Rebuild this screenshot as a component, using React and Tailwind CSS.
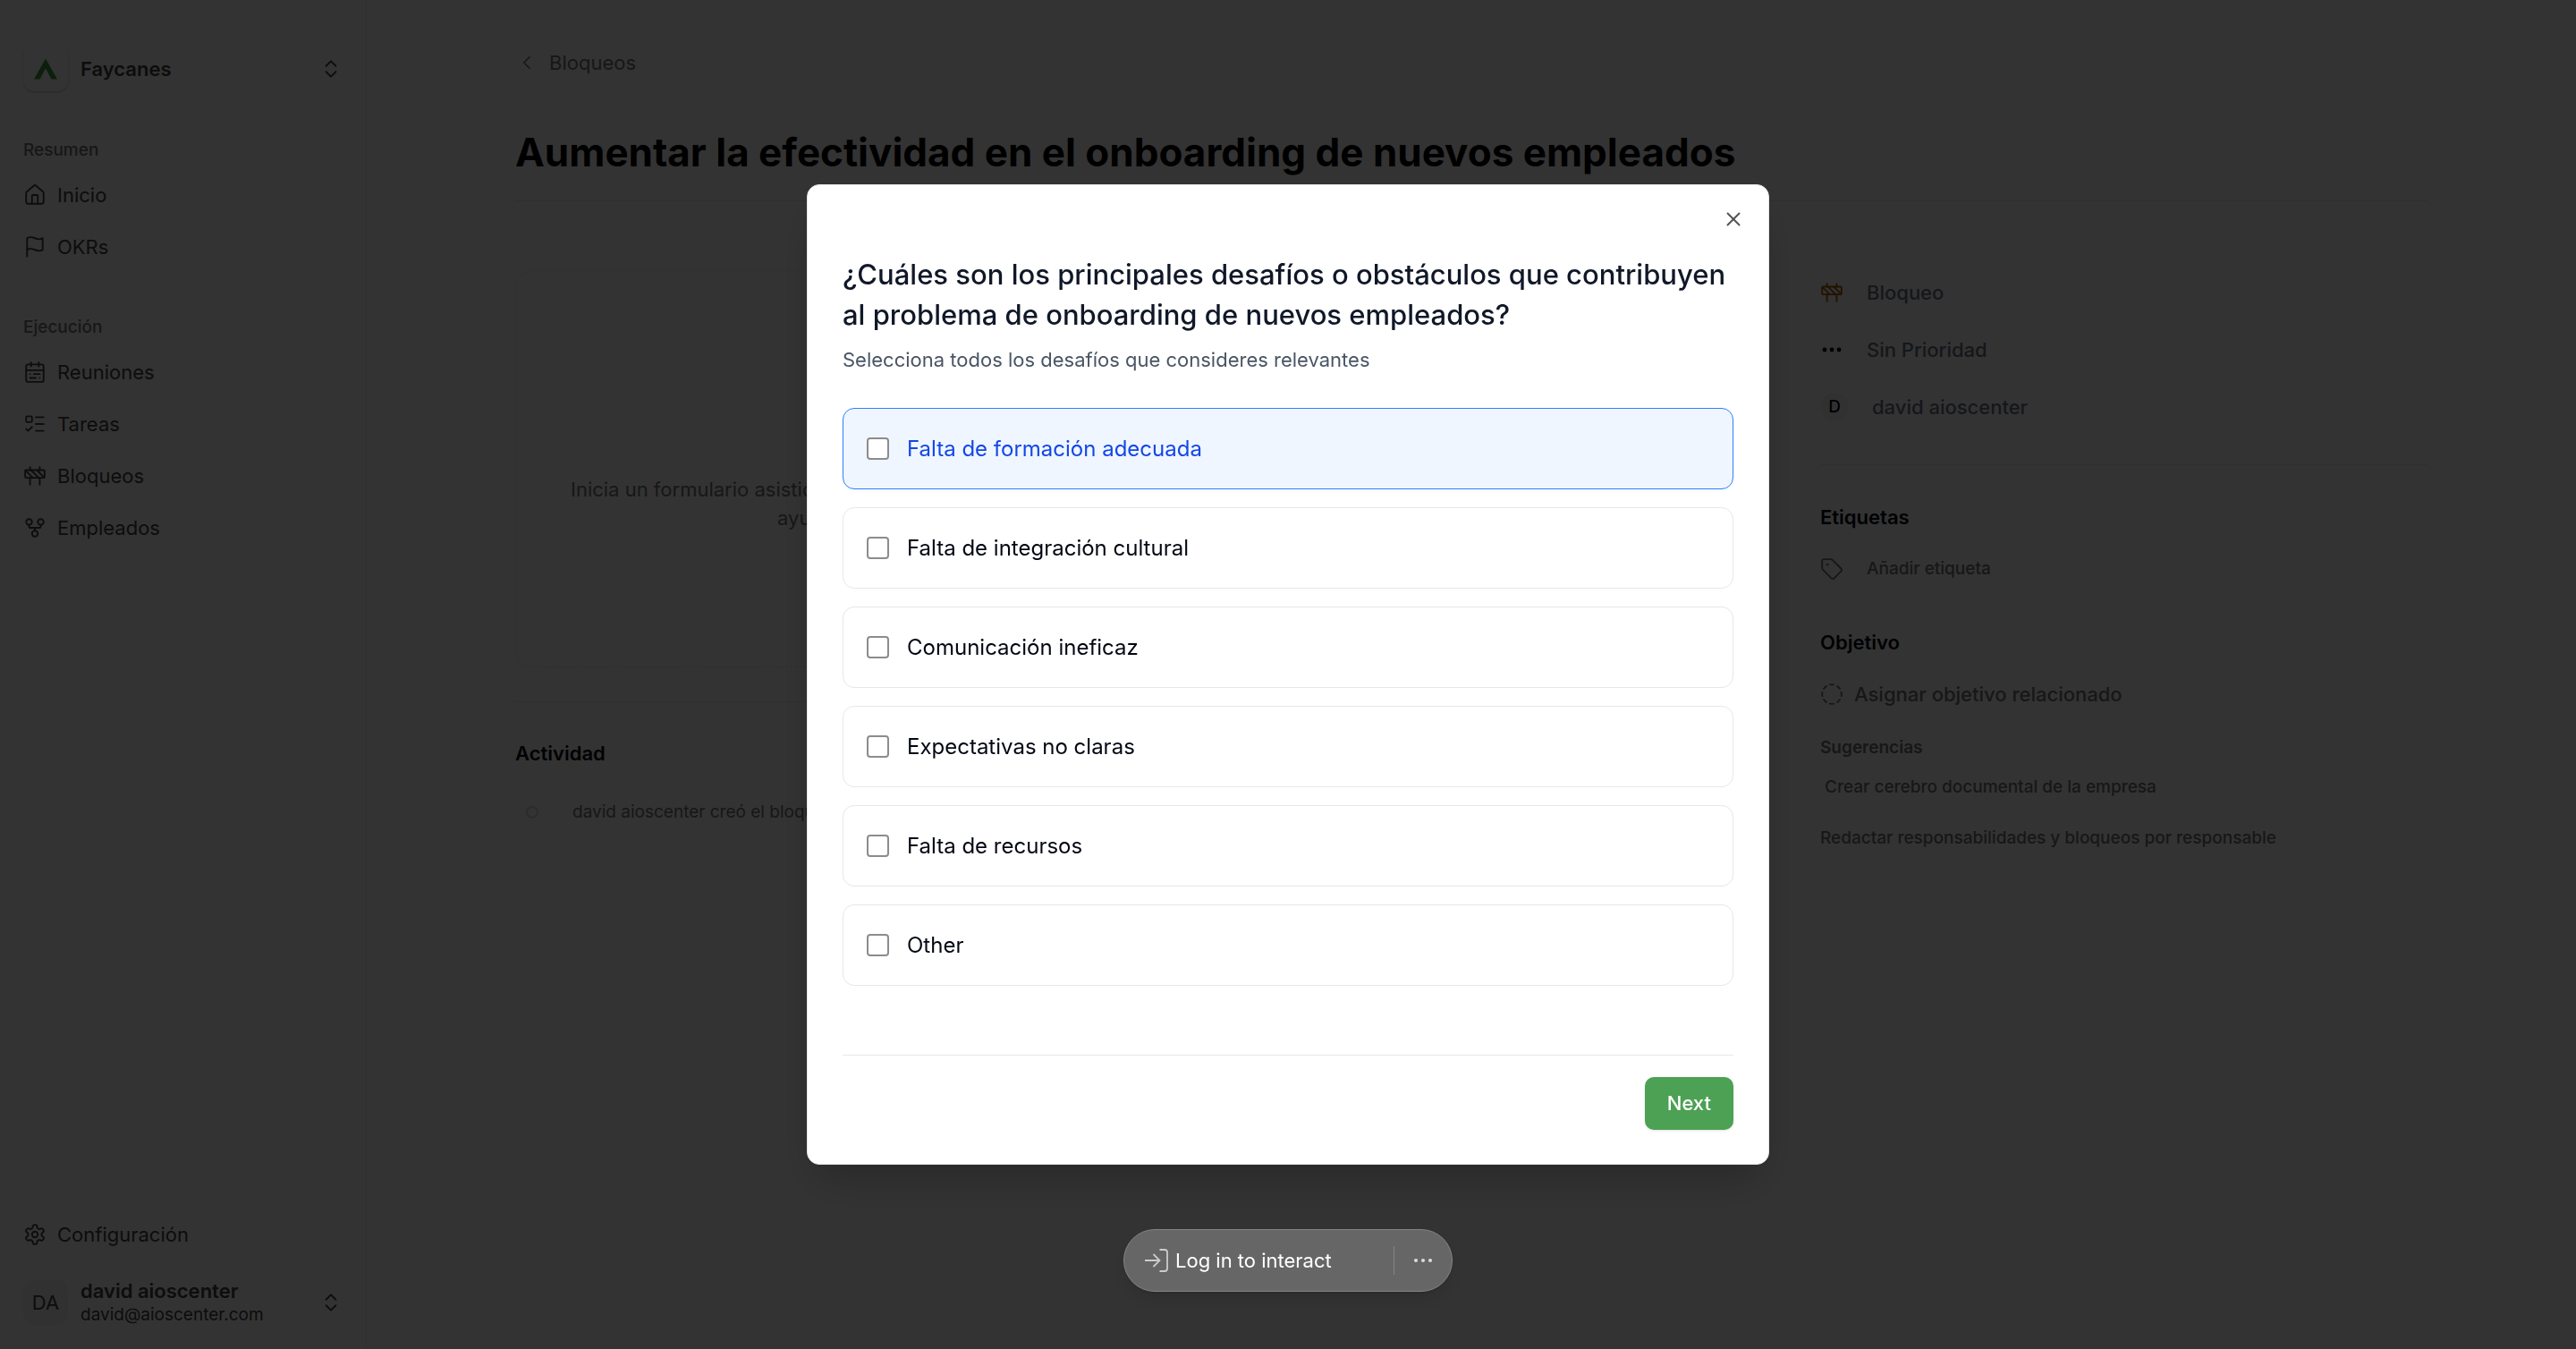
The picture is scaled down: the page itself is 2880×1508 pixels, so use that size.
import React, { useState } from 'react';
import {
  CalendarRange,
  ChevronLeft,
  ChevronsUpDown,
  CircleDashed,
  Construction,
  GitFork,
  House,
  ListTodo,
  Tag,
  X,
} from 'lucide-react';

const FlagIcon = ({ className }) => (
  <svg className={className} viewBox="0 0 24 24" fill="none" stroke="currentColor" strokeWidth="1.75" strokeLinecap="round" strokeLinejoin="round">
    <path d="M4 15s1-1 4-1 5 2 8 2 4-1 4-1V3s-1 1-4 1-5-2-8-2-4 1-4 1z" />
    <path d="M4 22v-7" />
  </svg>
);

const SettingsIcon = ({ className }) => (
  <svg className={className} viewBox="0 0 24 24" fill="none" stroke="currentColor" strokeWidth="1.75" strokeLinecap="round" strokeLinejoin="round">
    <path d="M12.22 2h-.44a2 2 0 0 0-2 2v.18a2 2 0 0 1-1 1.73l-.43.25a2 2 0 0 1-2 0l-.15-.08a2 2 0 0 0-2.73.73l-.22.38a2 2 0 0 0 .73 2.73l.15.1a2 2 0 0 1 1 1.72v.51a2 2 0 0 1-1 1.74l-.15.09a2 2 0 0 0-.73 2.73l.22.38a2 2 0 0 0 2.73.73l.15-.08a2 2 0 0 1 2 0l.43.25a2 2 0 0 1 1 1.73V20a2 2 0 0 0 2 2h.44a2 2 0 0 0 2-2v-.18a2 2 0 0 1 1-1.73l.43-.25a2 2 0 0 1 2 0l.15.08a2 2 0 0 0 2.73-.73l.22-.39a2 2 0 0 0-.73-2.73l-.15-.08a2 2 0 0 1-1-1.74v-.5a2 2 0 0 1 1-1.74l.15-.09a2 2 0 0 0 .73-2.73l-.22-.38a2 2 0 0 0-2.73-.73l-.15.08a2 2 0 0 1-2 0l-.43-.25a2 2 0 0 1-1-1.73V4a2 2 0 0 0-2-2z" />
    <circle cx="12" cy="12" r="3" />
  </svg>
);

const DotsIcon = ({ className }) => (
  <svg className={className} viewBox="0 0 26 26" fill="currentColor">
    <circle cx="5" cy="13" r="2.4" />
    <circle cx="13" cy="13" r="2.4" />
    <circle cx="21" cy="13" r="2.4" />
  </svg>
);

const sections = [
  {
    title: 'Resumen',
    items: [
      { label: 'Inicio', icon: House },
      { label: 'OKRs', icon: FlagIcon },
    ],
  },
  {
    title: 'Ejecución',
    items: [
      { label: 'Reuniones', icon: CalendarRange },
      { label: 'Tareas', icon: ListTodo },
      { label: 'Bloqueos', icon: Construction },
      { label: 'Empleados', icon: GitFork },
    ],
  },
];

const options = [
  'Falta de formación adecuada',
  'Falta de integración cultural',
  'Comunicación ineficaz',
  'Expectativas no claras',
  'Falta de recursos',
  'Other',
];

const NavItem = ({ icon: Icon, label }) => (
  <a href="#" className="flex h-[52px] items-center gap-3 text-[22px] text-neutral-700">
    <Icon className="size-[26px]" strokeWidth={1.75} />
    {label}
  </a>
);

const Sidebar = () => (
  <aside className="flex w-[410px] shrink-0 flex-col border-r border-[#ececec] px-[26px] pt-[52px] pb-[27px]">
    <button type="button" className="flex items-center gap-[14px] text-left">
      <span className="flex size-[50px] items-center justify-center rounded-xl shadow-sm shadow-black/20">
        <svg className="size-[26px]" viewBox="0 0 26 26">
          <path d="M13 1.5 26 24.5H19.5L13 12.5 6.5 24.5H0Z" fill="#3f9d43" />
        </svg>
      </span>
      <span className="flex-1 text-[22px] font-semibold text-neutral-700">Faycanes</span>
      <ChevronsUpDown className="size-[26px] text-neutral-700" strokeWidth={1.75} />
    </button>

    <nav className="mt-[54px] flex flex-col gap-[52px]">
      {sections.map((section) => (
        <div key={section.title}>
          <h2 className="mb-3 text-[19px] leading-6 font-medium text-neutral-500">{section.title}</h2>
          <div className="flex flex-col gap-[6px]">
            {section.items.map((item) => (
              <NavItem key={item.label} {...item} />
            ))}
          </div>
        </div>
      ))}
    </nav>

    <div className="mt-auto">
      <NavItem icon={SettingsIcon} label="Configuración" />
      <button type="button" className="mt-[25px] flex h-[50px] w-full items-center gap-[14px] text-left text-neutral-700">
        <span className="flex size-[50px] items-center justify-center rounded-xl bg-neutral-100 text-[22px]">DA</span>
        <span className="flex-1">
          <span className="block text-[22px] leading-7 font-semibold">david aioscenter</span>
          <span className="block text-[19px] leading-[26px]">david@aioscenter.com</span>
        </span>
        <ChevronsUpDown className="size-[26px]" strokeWidth={1.75} />
      </button>
    </div>
  </aside>
);

const Details = () => (
  <div className="pt-[39px]">
    <div className="flex flex-col text-[22px] font-medium text-gray-500">
      <button type="button" className="flex h-16 items-center gap-[26px]">
        <Construction className="size-[26px] text-yellow-700" strokeWidth={1.75} />
        Bloqueo
      </button>
      <button type="button" className="flex h-16 items-center gap-[26px]">
        <DotsIcon className="size-[26px] text-black" />
        Sin Prioridad
      </button>
      <button type="button" className="flex h-16 items-center gap-[26px]">
        <span className="flex size-8 items-center justify-center rounded-full bg-neutral-100 text-[19px] text-black">D</span>
        david aioscenter
      </button>
    </div>

    <div className="mt-8 border-t border-[#ececec] pt-[42px]">
      <h2 className="text-[22px] leading-8 font-semibold text-gray-950">Etiquetas</h2>
      <button type="button" className="mt-[26px] flex h-8 items-center gap-[26px] text-[19px] font-medium text-neutral-500">
        <Tag className="size-[26px]" strokeWidth={1.75} />
        Añadir etiqueta
      </button>
    </div>

    <div className="mt-[50px]">
      <h2 className="text-[22px] leading-8 font-semibold text-gray-950">Objetivo</h2>
      <button type="button" className="mt-[26px] flex h-8 items-center gap-3 text-[22px] font-medium text-neutral-500">
        <CircleDashed className="size-[26px]" strokeWidth={1.75} />
        Asignar objetivo relacionado
      </button>
      <h3 className="mt-8 text-[19px] leading-6 font-semibold text-neutral-500">Sugerencias</h3>
      <div className="mt-5 flex flex-col items-start gap-[33px] text-[19px] leading-6 font-medium text-neutral-500">
        <a href="#" className="pl-[5px]">Crear cerebro documental de la empresa</a>
        <a href="#">Redactar responsabilidades y bloqueos por responsable</a>
      </div>
    </div>
  </div>
);

const Issue = () => (
  <main className="min-w-0 flex-1 px-[166px] pt-[54px]">
    <a href="#" className="flex h-8 items-center gap-3 text-[22px] text-neutral-500">
      <ChevronLeft className="size-[26px]" strokeWidth={1.5} />
      Bloqueos
    </a>
    <h1 className="mt-[54px] border-b border-[#ececec] pb-[24px] text-[44px] leading-[60px] font-bold text-black">
      Aumentar la efectividad en el onboarding de nuevos empleados
    </h1>

    <div className="grid grid-cols-[minmax(0,1fr)_679px] gap-[67px] pt-[31px]">
      <div className="pt-[46px]">
        <div className="h-[444px] rounded-[20px] border border-dashed border-neutral-200 pt-[228px] text-center text-[22px] leading-8 text-neutral-500">
          <p>
            Inicia un formulario asistido por inteligencia artificial para analizar a fondo el problema, encontrar sus causas principales y
            <br />
            ayudarte a definir un plan de acción para resolver este bloqueo con tu equipo
          </p>
        </div>
        <section className="mt-[38px] border-t border-[#ececec] pt-[41px]">
          <h2 className="text-[22px] leading-8 font-semibold text-gray-950">Actividad</h2>
          <div className="mt-[38px] flex items-center text-[19px] leading-6 text-neutral-500">
            <span className="mr-[38px] ml-3 size-[14px] rounded-full border-2 border-neutral-300" />
            david aioscenter creó el bloqueo
          </div>
        </section>
      </div>
      <Details />
    </div>
  </main>
);

const ChallengeDialog = () => {
  const [checked, setChecked] = useState([]);

  const toggle = (option) => {
    setChecked((prev) => (prev.includes(option) ? prev.filter((o) => o !== option) : [...prev, option]));
  };

  return (
    <div className="fixed inset-0 flex items-center justify-center bg-black/80">
      <div role="dialog" aria-labelledby="dialog-title" className="relative w-full max-w-[1076px] rounded-[14px] border border-neutral-200 bg-white px-[39px] pt-[77px] pb-[38px] shadow-2xl">
        <button type="button" aria-label="Close" className="absolute top-[25px] right-[26px] text-neutral-600">
          <X className="size-[26px]" strokeWidth={1.75} />
        </button>
        <h2 id="dialog-title" className="text-[31px] leading-[45px] font-medium text-gray-900">
          ¿Cuáles son los principales desafíos o obstáculos que contribuyen al problema de onboarding de nuevos empleados?
        </h2>
        <p className="mt-3 text-[22px] leading-8 text-gray-600">Selecciona todos los desafíos que consideres relevantes</p>

        <form>
          <div className="mt-[38px] flex flex-col gap-5">
            {options.map((option, i) => (
              <label
                key={option}
                className={
                  i === 0
                    ? 'flex h-[91px] items-center gap-5 rounded-[13px] border border-blue-500 bg-blue-50 px-[26px] text-[24px] text-blue-700'
                    : 'flex h-[91px] items-center gap-5 rounded-[13px] border border-gray-200 px-[26px] text-[24px] text-gray-950'
                }
              >
                <input
                  type="checkbox"
                  checked={checked.includes(option)}
                  onChange={() => toggle(option)}
                  className="size-[25px] appearance-none rounded border-2 border-[#8c8c8c] bg-white checked:bg-blue-600"
                />
                {option}
              </label>
            ))}
          </div>
          <div className="mt-[77px] flex justify-end border-t border-gray-200 pt-6">
            <button type="button" className="h-[59px] rounded-[10px] bg-[#4ca154] px-[25px] text-[22px] font-medium text-white shadow-sm">
              Next
            </button>
          </div>
        </form>
      </div>
    </div>
  );
};

const DemoBar = () => (
  <div className="fixed inset-x-0 bottom-16 flex justify-center">
    <div className="flex h-[70px] w-[368px] items-center rounded-full border border-[#858585] bg-[#666666] pl-[23px] text-[22px] text-white shadow-lg">
      <button type="button" className="flex flex-1 items-center gap-2">
        <svg className="size-[26px]" viewBox="0 0 26 26" fill="none" stroke="#cccccc" strokeWidth="1.8">
          <path d="M0 13h16M9.5 6l7 7-7 7" />
          <path d="M16.5 1h5.5a3 3 0 0 1 3 3v18a3 3 0 0 1-3 3h-5.5" />
        </svg>
        Log in to interact
      </button>
      <span className="h-8 w-px bg-[#858585]" />
      <button type="button" aria-label="More" className="px-5">
        <svg className="size-6" viewBox="0 0 24 24" fill="#dddddd">
          <circle cx="4" cy="12" r="2" />
          <circle cx="12" cy="12" r="2" />
          <circle cx="20" cy="12" r="2" />
        </svg>
      </button>
    </div>
  </div>
);

export default function App() {
  return (
    <div className="flex min-h-screen bg-white font-[Inter,sans-serif]">
      <Sidebar />
      <Issue />
      <ChallengeDialog />
      <DemoBar />
    </div>
  );
}
